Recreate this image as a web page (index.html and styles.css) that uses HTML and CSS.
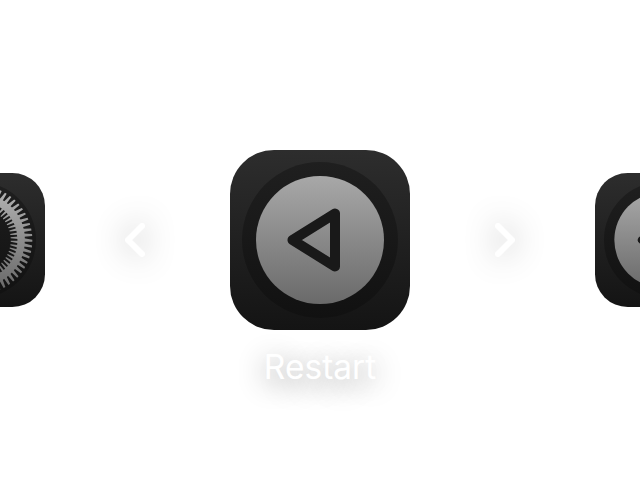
FILE: index.html
```html
<!DOCTYPE html>
<html lang="en">
<head>
<meta charset="utf-8">
<title>Restart</title>
<link rel="stylesheet" href="styles.css">
</head>
<body>
<main class="stage">
  <div class="carousel">
    <svg class="icon icon-side" viewBox="0 0 180 180" aria-hidden="true">
      <defs>
        <linearGradient id="tile1" x1="0" y1="0" x2="0" y2="1"><stop offset="0" stop-color="#2d2d2d"/><stop offset="1" stop-color="#141414"/></linearGradient>
        <linearGradient id="ring1" x1="0" y1="0" x2="0" y2="1"><stop offset="0" stop-color="#1f1f1f"/><stop offset="1" stop-color="#111"/></linearGradient>
        <linearGradient id="metal" gradientUnits="userSpaceOnUse" x1="0" y1="18" x2="0" y2="162"><stop offset="0" stop-color="#b4b4b4"/><stop offset="1" stop-color="#666"/></linearGradient>
      </defs>
      <rect width="180" height="180" rx="44" fill="url(#tile1)"/>
      <circle cx="90" cy="90" r="78" fill="url(#ring1)"/>
      <path id="gear-teeth" fill="url(#metal)"/>
      <circle cx="90" cy="90" r="58" fill="none" stroke="url(#metal)" stroke-width="10"/>
      <path d="M90 90H36M90 90l27-47M90 90l27 47" stroke="url(#metal)" stroke-width="4" fill="none"/>
      <circle cx="90" cy="90" r="15" fill="none" stroke="url(#metal)" stroke-width="8"/>
    </svg>
    <div class="nav nav-prev"><svg class="chevron" viewBox="0 0 20 34" aria-hidden="true"><path d="M17 3 3 17l14 14"/></svg></div>
    <svg class="icon icon-main" viewBox="0 0 180 180" aria-hidden="true">
      <defs>
        <linearGradient id="tile2" x1="0" y1="0" x2="0" y2="1"><stop offset="0" stop-color="#2d2d2d"/><stop offset="1" stop-color="#141414"/></linearGradient>
        <linearGradient id="ring2" x1="0" y1="0" x2="0" y2="1"><stop offset="0" stop-color="#1f1f1f"/><stop offset="1" stop-color="#111"/></linearGradient>
        <linearGradient id="disc2" x1="0" y1="0" x2="0" y2="1"><stop offset="0" stop-color="#a8a8a8"/><stop offset="1" stop-color="#6a6a6a"/></linearGradient>
      </defs>
      <rect width="180" height="180" rx="44" fill="url(#tile2)"/>
      <circle cx="90" cy="90" r="78" fill="url(#ring2)"/>
      <circle cx="90" cy="90" r="64" fill="url(#disc2)"/>
      <path d="M62.500 90 105 63.500V116.500Z" fill="none" stroke="#191919" stroke-width="10" stroke-linejoin="round"/>
    </svg>
    <div class="nav nav-next"><svg class="chevron" viewBox="0 0 20 34" aria-hidden="true"><path d="M3 3l14 14L3 31"/></svg></div>
    <svg class="icon icon-side" viewBox="0 0 180 180" aria-hidden="true">
      <rect width="180" height="180" rx="44" fill="url(#tile2)"/>
      <circle cx="90" cy="90" r="78" fill="url(#ring2)"/>
      <circle cx="90" cy="90" r="64" fill="url(#disc2)"/>
      <path d="M62.500 90 105 63.500V116.500Z" fill="none" stroke="#191919" stroke-width="10" stroke-linejoin="round"/>
    </svg>
  </div>
  <p class="label">Restart</p>
</main>
<script src="gear.js"></script>
</body>
</html>
```
FILE: gear.js
```js
// Builds the tapered outer and inner teeth of the settings gear.
(function () {
  var cx = 90, cy = 90, count = 60, d = "";
  function pt(r, a) {
    return (cx + r * Math.cos(a)).toFixed(2) + " " + (cy + r * Math.sin(a)).toFixed(2);
  }
  function tooth(r1, r2, a, baseHalf, tipHalf, skew) {
    return "M" + pt(r1, a - baseHalf) + "L" + pt(r2, a - tipHalf + skew) +
      "L" + pt(r2, a + tipHalf + skew) + "L" + pt(r1, a + baseHalf) + "Z";
  }
  for (var i = 0; i < count; i++) {
    var a = (i / count) * Math.PI * 2;
    d += tooth(62, 73, a, 0.036, 0.018, 0.014);
    d += tooth(54, 44, a + 0.05, 0.03, 0.016, -0.012);
  }
  document.getElementById("gear-teeth").setAttribute("d", d);
})();
```
FILE: styles.css
```css
html, body {
  margin: 0;
  height: 100%;
  background: #fff;
  overflow: hidden;
}
.stage {
  height: 480px;
  display: grid;
  grid-template-columns: minmax(0, 1fr);
  grid-template-rows: 1fr auto 1fr;
  overflow: hidden;
}
.carousel {
  grid-row: 2;
  min-width: 0;
  display: flex;
  align-items: center;
  justify-content: center;
}
.icon { display: block; flex: none; }
.icon-main { width: 180px; height: 180px; }
.icon-side { width: 134px; height: 134px; }
.nav {
  flex: none;
  width: 180px;
  display: flex;
  justify-content: center;
}
.nav-prev { padding-right: 5px; }
.nav-next { padding-left: 5px; }
.chevron {
  display: block;
  width: 20px;
  height: 34px;
  filter: drop-shadow(0 0 16px rgba(0,0,0,.38));
}
.chevron path {
  fill: none;
  stroke: #fff;
  stroke-width: 6;
  stroke-linecap: round;
  stroke-linejoin: round;
}
.label {
  grid-row: 3;
  margin: 0;
  padding-top: 17px;
  text-align: center;
  color: #fff;
  font: 400 33.500px/40px Inter, sans-serif;
  text-shadow: 0 6px 28px rgba(0,0,0,.45);
}
```
